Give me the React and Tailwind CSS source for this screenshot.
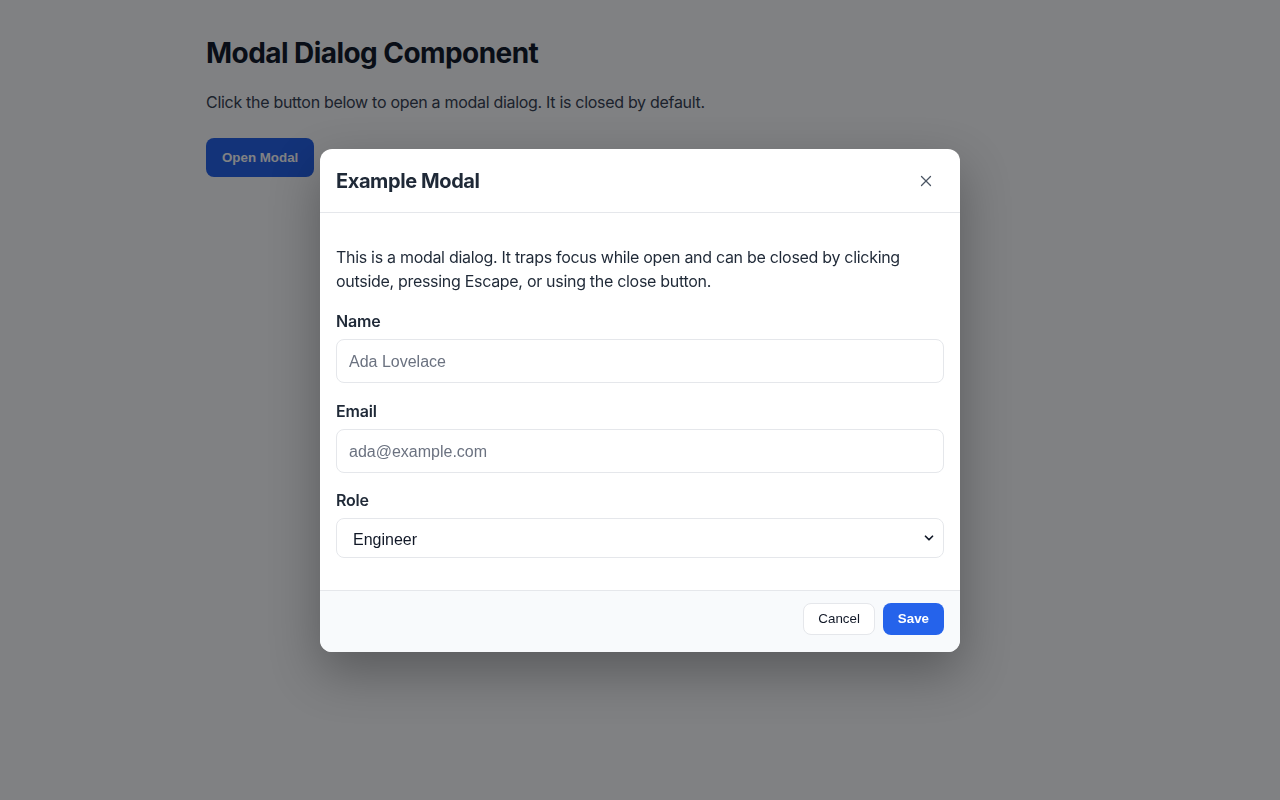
import React from "react";
import { X, ChevronDown } from "lucide-react";

const field = "font-['Liberation_Sans',Arial,sans-serif]";

const ModalDialog = () => {
  return (
    <div className="fixed inset-0 flex items-center justify-center bg-[rgba(2,4,8,0.5)]">
      <div className="w-[640px] overflow-hidden rounded-xl bg-white shadow-[0_20px_50px_rgba(0,0,0,0.3)]">
        <div className="flex h-16 items-center justify-between border-b border-[#e5e7eb] pl-4 pr-[18px] pt-0.5">
          <h2 className="text-xl font-bold tracking-[-0.02em] text-[#1f2937]">Example Modal</h2>
          <button className="flex h-8 w-8 items-center justify-center rounded-md text-[#4b5563]">
            <X size={18} strokeWidth={1.75} />
          </button>
        </div>

        <div className="px-4 pt-8 pb-8">
          <p className="text-base leading-6 tracking-[-0.3px] text-[#1f2937]">
            This is a modal dialog. It traps focus while open and can be closed by clicking outside,
            pressing Escape, or using the close button.
          </p>

          <label className="mt-4 block text-base font-semibold leading-6 tracking-[-0.2px] text-[#1f2937]">Name</label>
          <input
            type="text"
            placeholder="Ada Lovelace"
            className={`${field} mt-1.5 block h-11 w-full rounded-lg border border-[#e5e7eb] px-3 pt-0.5 text-base text-[#1f2937] placeholder:text-[#6b7280]`}
          />

          <label className="mt-4 block text-base font-semibold leading-6 tracking-[-0.2px] text-[#1f2937]">Email</label>
          <input
            type="email"
            placeholder="ada@example.com"
            className={`${field} mt-1.5 block h-11 w-full rounded-lg border border-[#e5e7eb] px-3 pt-0.5 text-base text-[#1f2937] placeholder:text-[#6b7280]`}
          />

          <label className="mt-[15px] block text-base font-semibold leading-6 tracking-[-0.2px] text-[#1f2937]">Role</label>
          <div className="relative mt-1.5">
            <select
              defaultValue="Engineer"
              className={`${field} block h-10 w-full appearance-none rounded-lg border border-[#e5e7eb] bg-white pl-4 pt-1 text-base text-[#111827]`}
            >
              <option>Engineer</option>
              <option>Designer</option>
              <option>Manager</option>
            </select>
            <ChevronDown
              size={14}
              strokeWidth={3}
              className="pointer-events-none absolute right-2 top-1/2 -translate-y-1/2 text-[#111827]"
            />
          </div>
        </div>

        <div className="flex justify-end gap-2 border-t border-[#e5e7eb] bg-[#f8fafc] px-4 pt-3 pb-[17px]">
          <button className={`${field} h-8 rounded-lg border border-[#e5e7eb] bg-white px-[14px] text-[13.33px] text-[#111827]`}>
            Cancel
          </button>
          <button className={`${field} h-8 rounded-lg bg-[#2563eb] px-[15px] text-[13.33px] font-bold text-white`}>
            Save
          </button>
        </div>
      </div>
    </div>
  );
};

export default function App() {
  return (
    <div className="min-h-screen bg-white font-['Inter',sans-serif]">
      <div className="mx-auto max-w-[900px] px-4 pt-[37px]">
        <h1 className="text-[28px] font-bold leading-8 tracking-[-0.02em] text-[#111827]">Modal Dialog Component</h1>
        <p className="mt-[21px] text-base leading-6 tracking-[-0.3px] text-[#374151]">
          Click the button below to open a modal dialog. It is closed by default.
        </p>
        <button className={`${field} mt-6 h-[39px] rounded-lg bg-[#2563eb] px-4 text-[13.33px] font-bold text-white`}>
          Open Modal
        </button>
      </div>
      <ModalDialog />
    </div>
  );
}
